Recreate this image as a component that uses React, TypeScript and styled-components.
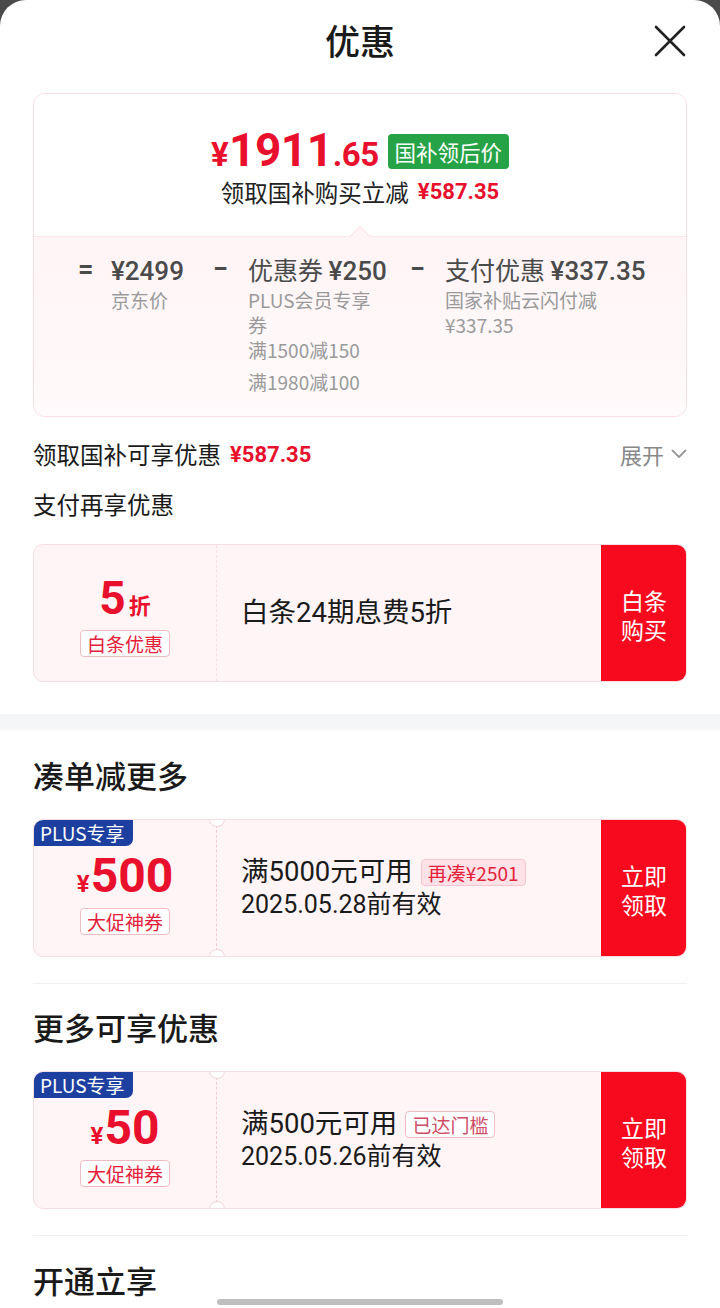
import React from 'react';
import styled, { createGlobalStyle } from 'styled-components';

const GlobalStyle = createGlobalStyle`
  html, body { margin: 0; padding: 0; background: #4a4a4a; }
  body { font-family: "Noto Sans CJK SC", "Noto Sans", sans-serif; color: #1a1a1a; }
  * { box-sizing: border-box; }
`;

const NUM = `"Roboto", "Liberation Sans", "Noto Sans CJK SC", sans-serif`;
const RED = '#e8102c';

const Sheet = styled.div`
  width: 720px;
  min-height: 1308px;
  background: #fff;
  border-radius: 26px 26px 0 0;
  position: relative;
  overflow: hidden;
`;

const Header = styled.header`
  height: 84px;
  display: grid;
  grid-template-columns: 1fr auto 1fr;
  align-items: center;
`;

const Title = styled.h1`
  grid-column: 2;
  margin: 0 0 4px;
  font-size: 35px;
  font-weight: 500;
  line-height: 48px;
  color: #1a1a1a;
`;

const CloseBtn = styled.button`
  grid-column: 3;
  justify-self: end;
  margin: 0 32px 2px 0;
  width: 36px;
  height: 36px;
  padding: 0;
  border: none;
  background: none;
  display: flex;
  align-items: center;
  justify-content: center;
`;

const Section = styled.section`
  padding: 0 33px;
`;

const PriceCard = styled.div`
  margin-top: 9px;
  border: 1px solid #f9dde2;
  border-radius: 12px;
  overflow: hidden;
`;

const PriceTop = styled.div`
  padding: 36px 0 29px;
  display: flex;
  flex-direction: column;
  align-items: center;
  background: #fff;
`;

const PriceLine = styled.div`
  display: flex;
  align-items: center;
  gap: 9px;
  height: 40px;
`;

const BigPrice = styled.div`
  display: flex;
  align-items: baseline;
  color: ${RED};
  font-family: ${NUM};
  font-weight: 700;
  letter-spacing: -0.5px;
`;

const Yen = styled.span<{ $size: number }>`
  font-size: ${(p) => p.$size}px;
  margin-right: 1px;
`;

const Digits = styled.span<{ $size: number }>`
  font-size: ${(p) => p.$size}px;
`;

const GreenBadge = styled.span`
  background: #27a347;
  color: #fff;
  font-size: 21.5px;
  height: 35px;
  line-height: 35px;
  padding: 0 7px;
  border-radius: 4px;
  margin-top: 3px;
`;

const SubLine = styled.div`
  margin-top: 7px;
  font-size: 23.5px;
  line-height: 30px;
  color: #222;
  display: flex;
  align-items: center;
  gap: 9px;
`;

const RedAmount = styled.span<{ $size?: number }>`
  color: ${RED};
  font-family: ${NUM};
  font-weight: 700;
  font-size: ${(p) => p.$size ?? 22}px;
`;

const Breakdown = styled.div`
  position: relative;
  background: linear-gradient(180deg, #fff4f6 0%, #fffafb 100%);
  border-top: 1px solid #fbe6ea;
  padding: 16px 0 22px 44px;
  display: grid;
  grid-template-columns: 33px 102px 35px 162px 35px 1fr;
  align-items: start;

  &::before {
    content: '';
    position: absolute;
    left: 50%;
    top: -8px;
    width: 14px;
    height: 14px;
    transform: translateX(-50%) rotate(45deg);
    background: #fff4f6;
    border-left: 1px solid #fbe0e5;
    border-top: 1px solid #fbe0e5;
  }
`;

const Op = styled.span`
  font-size: 27px;
  line-height: 32px;
  color: #4a4a4a;
  font-weight: 700;
  font-family: ${NUM};
`;

const Col = styled.div`
  display: flex;
  flex-direction: column;
`;

const ColMain = styled.div`
  font-size: 25px;
  line-height: 32px;
  color: #4a4a4a;
  white-space: nowrap;
`;

const ColNum = styled.span`
  font-family: ${NUM};
  font-weight: 500;
  font-size: 26px;
`;

const ColSub = styled.div<{ $gap?: number; $narrow?: boolean }>`
  font-size: 19px;
  line-height: 25px;
  color: #9a9a9a;
  max-width: ${(p) => (p.$narrow ? '140px' : 'none')};
  white-space: ${(p) => (p.$narrow ? 'normal' : 'nowrap')};
  margin-top: ${(p) => p.$gap ?? 0}px;
`;

const InfoRow = styled.div<{ $top: number }>`
  margin-top: ${(p) => p.$top}px;
  height: 36px;
  display: flex;
  align-items: center;
  justify-content: space-between;
  font-size: 23.5px;
  color: #1a1a1a;
`;

const InfoLeft = styled.div`
  display: flex;
  align-items: center;
  gap: 9px;
`;

const Expand = styled.span`
  color: #888;
  font-size: 22px;
  display: flex;
  align-items: center;
  gap: 7px;
`;

const Card = styled.div<{ $top: number }>`
  margin-top: ${(p) => p.$top}px;
  height: 138px;
  display: flex;
  position: relative;
  background: #fff5f6;
  border: 1px solid #f7dde1;
  border-radius: 10px;
  overflow: hidden;
`;

const CardLeft = styled.div<{ $notched?: boolean }>`
  width: 183px;
  flex-shrink: 0;
  display: flex;
  flex-direction: column;
  align-items: center;
  justify-content: center;
  gap: 7px;
  padding-top: ${(p) => (p.$notched ? 10 : 4)}px;
  border-right: 1px dashed ${(p) => (p.$notched ? '#f2ccd2' : '#f6e0e3')};
`;

const Notch = styled.span<{ $pos: 'top' | 'bottom' }>`
  position: absolute;
  left: 175px;
  ${(p) => (p.$pos === 'top' ? 'top: -9px;' : 'bottom: -9px;')}
  width: 16px;
  height: 16px;
  border-radius: 50%;
  background: #fff;
  border: 1px solid #f2d3d8;
`;

const PlusBadge = styled.span`
  position: absolute;
  top: -1px;
  left: -1px;
  height: 27px;
  line-height: 27px;
  padding: 0 8px 0 7px;
  background: #1d3f9f;
  color: #fff;
  font-size: 19px;
  border-radius: 10px 0 7px 0;
`;

const Amount = styled.div`
  display: flex;
  align-items: baseline;
  color: ${RED};
  font-family: ${NUM};
  font-weight: 700;
  line-height: 50px;
  height: 50px;
`;

const Unit = styled.span<{ $size: number }>`
  font-size: ${(p) => p.$size}px;
  font-family: "Noto Sans CJK SC", sans-serif;
  font-weight: 700;
  margin-left: 3px;
`;

const Tag = styled.span<{ $variant?: 'outline' | 'filled' | 'muted' }>`
  font-family: "Noto Sans CJK SC", sans-serif;
  font-size: 19px;
  line-height: 25px;
  padding: 0 6px;
  border-radius: 4px;
  border: 1px solid ${(p) => (p.$variant === 'filled' ? '#f6c5cd' : '#f0bcc4')};
  background: ${(p) => (p.$variant === 'filled' ? '#ffe2e7' : '#fff')};
  color: ${(p) => (p.$variant === 'muted' ? '#cf4d66' : '#e3213b')};
  white-space: nowrap;
`;

const CardMain = styled.div`
  flex: 1;
  padding-left: 24px;
  display: flex;
  flex-direction: column;
  justify-content: center;
  font-family: "Roboto", "Noto Sans CJK SC", sans-serif;
`;

const MainTitle = styled.div`
  font-size: 27.5px;
  line-height: 34px;
  color: #1a1a1a;
  display: flex;
  align-items: center;
  gap: 8px;
`;

const MainSub = styled.div`
  font-size: 25px;
  line-height: 32px;
  color: #1a1a1a;
`;

const RedButton = styled.button`
  width: 86px;
  flex-shrink: 0;
  margin: -1px -1px -1px 0;
  border: none;
  background: #f70a1e;
  display: flex;
  align-items: center;
  justify-content: center;
  padding: 4px 0 0;
`;

const ButtonLabel = styled.span`
  width: 48px;
  color: #fff;
  font-family: "Noto Sans CJK SC", sans-serif;
  font-size: 23px;
  line-height: 29px;
  text-align: center;
  word-break: break-all;
`;

const Band = styled.div`
  margin-top: 32px;
  height: 16px;
  background: #f5f6f8;
`;

const SectionTitle = styled.h2<{ $top: number }>`
  margin: ${(p) => p.$top}px 0 0;
  font-size: 31px;
  line-height: 44px;
  font-weight: 500;
  color: #1a1a1a;
`;

const Divider = styled.div`
  margin-top: 26px;
  height: 1px;
  background: #f1f1f1;
`;

const HomeBar = styled.div`
  position: absolute;
  bottom: 3px;
  left: 50%;
  transform: translateX(-50%);
  width: 286px;
  height: 6px;
  border-radius: 3px;
  background: #bfbfbf;
`;

const CloseIcon = () => (
  <svg width="34" height="34" viewBox="0 0 34 34">
    <path d="M3 3 L31 31 M31 3 L3 31" stroke="#222" strokeWidth="2.6" strokeLinecap="round" />
  </svg>
);

const Chevron = () => (
  <svg width="16" height="10" viewBox="0 0 16 10">
    <path d="M1.5 1.5 L8 8 L14.5 1.5" stroke="#999" strokeWidth="1.8" fill="none" strokeLinecap="round" strokeLinejoin="round" />
  </svg>
);

type Coupon = {
  amount: string;
  title: string;
  tag: string;
  tagVariant: 'filled' | 'muted';
  date: string;
};

const CouponCard = ({ c, top }: { c: Coupon; top: number }) => (
  <Card $top={top}>
    <CardLeft $notched>
      <Amount>
        <Yen $size={24}>¥</Yen>
        <Digits $size={48}>{c.amount}</Digits>
      </Amount>
      <Tag>大促神券</Tag>
    </CardLeft>
    <Notch $pos="top" />
    <Notch $pos="bottom" />
    <PlusBadge>PLUS专享</PlusBadge>
    <CardMain>
      <MainTitle>
        {c.title}
        <Tag $variant={c.tagVariant}>{c.tag}</Tag>
      </MainTitle>
      <MainSub>{c.date}</MainSub>
    </CardMain>
    <RedButton>
      <ButtonLabel>立即领取</ButtonLabel>
    </RedButton>
  </Card>
);

export default function App() {
  return (
    <>
      <GlobalStyle />
      <Sheet>
        <Header>
          <Title>优惠</Title>
          <CloseBtn aria-label="关闭">
            <CloseIcon />
          </CloseBtn>
        </Header>

        <Section>
          <PriceCard>
            <PriceTop>
              <PriceLine>
                <BigPrice>
                  <Yen $size={33}>¥</Yen>
                  <Digits $size={46}>1911</Digits>
                  <Digits $size={33}>.65</Digits>
                </BigPrice>
                <GreenBadge>国补领后价</GreenBadge>
              </PriceLine>
              <SubLine>
                领取国补购买立减
                <RedAmount>¥587.35</RedAmount>
              </SubLine>
            </PriceTop>
            <Breakdown>
              <Op>=</Op>
              <Col>
                <ColMain>
                  <ColNum>¥2499</ColNum>
                </ColMain>
                <ColSub>京东价</ColSub>
              </Col>
              <Op>−</Op>
              <Col>
                <ColMain>
                  优惠券 <ColNum>¥250</ColNum>
                </ColMain>
                <ColSub $narrow>PLUS会员专享券</ColSub>
                <ColSub>满1500减150</ColSub>
                <ColSub $gap={7}>满1980减100</ColSub>
              </Col>
              <Op>−</Op>
              <Col>
                <ColMain>
                  支付优惠 <ColNum>¥337.35</ColNum>
                </ColMain>
                <ColSub>国家补贴云闪付减</ColSub>
                <ColSub>¥337.35</ColSub>
              </Col>
            </Breakdown>
          </PriceCard>

          <InfoRow $top={19}>
            <InfoLeft>
              领取国补可享优惠
              <RedAmount>¥587.35</RedAmount>
            </InfoLeft>
            <Expand>
              展开
              <Chevron />
            </Expand>
          </InfoRow>
          <InfoRow $top={14}>
            <InfoLeft>支付再享优惠</InfoLeft>
          </InfoRow>

          <Card $top={22}>
            <CardLeft>
              <Amount>
                <Digits $size={46}>5</Digits>
                <Unit $size={22}>折</Unit>
              </Amount>
              <Tag>白条优惠</Tag>
            </CardLeft>
            <CardMain>
              <MainTitle>白条24期息费5折</MainTitle>
            </CardMain>
            <RedButton>
              <ButtonLabel>白条购买</ButtonLabel>
            </RedButton>
          </Card>
        </Section>

        <Band />

        <Section>
          <SectionTitle $top={23}>凑单减更多</SectionTitle>
          <CouponCard
            top={22}
            c={{ amount: '500', title: '满5000元可用', tag: '再凑¥2501', tagVariant: 'filled', date: '2025.05.28前有效' }}
          />
          <Divider />
          <SectionTitle $top={21}>更多可享优惠</SectionTitle>
          <CouponCard
            top={22}
            c={{ amount: '50', title: '满500元可用', tag: '已达门槛', tagVariant: 'muted', date: '2025.05.26前有效' }}
          />
          <Divider />
          <SectionTitle $top={22}>开通立享</SectionTitle>
        </Section>

        <HomeBar />
      </Sheet>
    </>
  );
}
